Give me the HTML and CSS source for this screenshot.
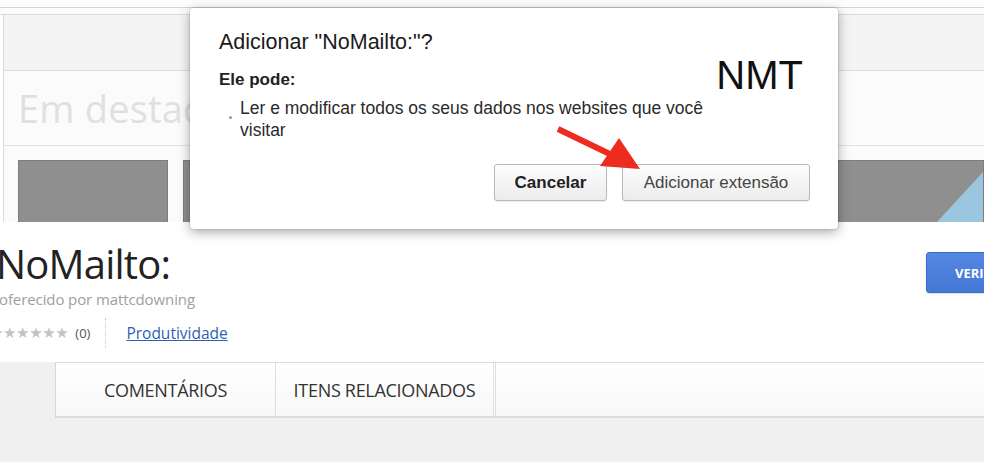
FILE: index.html
```html
<!DOCTYPE html>
<html lang="pt">
<head>
<meta charset="utf-8">
<title>NoMailto:</title>
<link rel="stylesheet" href="styles.css">
</head>
<body>
<div class="page">
  <div class="banner">
    <div class="banner-top"></div>
    <div class="banner-frame">
      <div class="band"></div>
      <div class="featured"><span class="featured-title">Em destaque</span></div>
      <div class="tiles">
        <div class="tile"></div>
        <div class="tile tile-wide"><div class="tile-accent"></div></div>
      </div>
    </div>
  </div>

  <div class="detail">
    <div class="detail-info">
      <h1 class="ext-title">NoMailto:</h1>
      <div class="ext-author">oferecido por mattcdowning</div>
      <div class="ext-meta">
        <span class="stars">★★★★★★</span>
        <span class="count">(0)</span>
        <span class="sep"></span>
        <a class="category" href="#">Produtividade</a>
      </div>
    </div>
    <div class="detail-action">
      <button class="btn-primary">VERIFICANDO...</button>
    </div>
  </div>

  <div class="tabs-area">
    <div class="tabs">
      <div class="tab">COMENTÁRIOS</div>
      <div class="tab">ITENS RELACIONADOS</div>
      <div class="tab-rest"></div>
    </div>
  </div>

  <div class="dialog">
    <div class="dialog-title">Adicionar "NoMailto:"?</div>
    <div class="dialog-body">
      <div class="dialog-sub">Ele pode:</div>
      <ul class="perms">
        <li>Ler e modificar todos os seus dados nos websites que você visitar</li>
      </ul>
      <div class="stamp">NMT</div>
    </div>
    <div class="dialog-actions">
      <button class="btn btn-bold">Cancelar</button>
      <button class="btn">Adicionar extensão</button>
    </div>
    <svg class="arrow" width="100" height="60" viewBox="0 0 100 60">
      <line x1="8" y1="8" x2="66" y2="36" stroke="#ee2b1f" stroke-width="6" stroke-linecap="butt"/>
      <polygon points="50,45 69,17 90,48" fill="#ee2b1f"/>
    </svg>
  </div>
</div>
</body>
</html>
```

FILE: styles.css
```css
* { box-sizing: border-box; }
html, body { margin: 0; padding: 0; }
body {
  width: 984px;
  height: 462px;
  overflow: hidden;
  background: #ffffff;
  font-family: "Open Sans", "Liberation Sans", sans-serif;
}
.page {
  position: relative;
  width: 984px;
  height: 462px;
  display: flex;
  flex-direction: column;
}

/* ---------- banner ---------- */
.banner { height: 222px; display: flex; flex-direction: column; }
.banner-top {
  height: 15px;
  background: #fbfbfb;
  border-top: 7px solid #fdfdfd;
  border-bottom: 1px solid #d9d9d9;
  box-shadow: inset 0 1px 0 #d4d4d4;
}
.banner-frame {
  flex: 1;
  margin-left: 3px;
  border-left: 1px solid #dcdcdc;
  display: flex;
  flex-direction: column;
}
.band {
  height: 56px;
  background: #f4f4f4;
  border-bottom: 1px solid #dedede;
}
.featured {
  height: 75px;
  background: #fbfbfb;
  border-bottom: 1px solid #e4e4e4;
  padding-left: 14px;
  display: flex;
  align-items: center;
}
.featured-title {
  font-size: 38px;
  color: #e0e0e0;
  font-weight: 400;
  letter-spacing: 0.2px;
}
.tiles {
  flex: 1;
  background: #fbfbfb;
  padding: 14px 0 0 14px;
  display: flex;
  gap: 15px;
}
.tile {
  width: 150px;
  background: #8f8f8f;
  border: 1px solid #7d7d7d;
  border-bottom: none;
}
.tile-wide { flex: 1; position: relative; overflow: hidden; }
.tile-accent {
  position: absolute;
  right: 0;
  bottom: 0;
  width: 46px;
  height: 50px;
  background: #9cc5df;
  clip-path: polygon(100% 0, 100% 100%, 0 100%);
}

/* ---------- detail ---------- */
.detail {
  height: 140px;
  display: flex;
  justify-content: space-between;
}
.detail-info { margin-left: -4px; padding-top: 17px; }
.ext-title {
  margin: 0;
  font-size: 40px;
  line-height: 50px;
  font-weight: 400;
  color: #222;
  letter-spacing: -0.8px;
}
.ext-author {
  font-size: 15px;
  color: #a0a0a0;
  line-height: 20px;
  padding-left: 3px;
  letter-spacing: -0.1px;
}
.ext-meta {
  display: flex;
  align-items: center;
  margin-top: 9px;
  height: 30px;
}
.stars {
  color: #c4c4c4;
  font-size: 15px;
  letter-spacing: -0.4px;
  font-family: "DejaVu Sans", sans-serif;
  margin-left: -6px;
}
.count { font-size: 13px; color: #555; margin-left: 7px; }
.sep {
  width: 0;
  height: 30px;
  border-left: 1px dotted #c8c8c8;
  margin: 0 20px 0 15px;
}
.category { font-size: 15.5px; color: #2f5fb3; text-decoration: underline; }

.detail-action { padding-top: 30px; }
.btn-primary {
  width: 110px;
  height: 41px;
  margin-right: -52px;
  background: linear-gradient(#5387e0, #4478d6);
  border: 1px solid #3c6bc6;
  border-radius: 3px;
  color: #fff;
  font-family: "Open Sans", "Liberation Sans", sans-serif;
  font-size: 13px;
  font-weight: 700;
  text-align: left;
  padding: 0 0 0 28px;
  white-space: nowrap;
  box-shadow: 0 1px 2px rgba(0,0,0,0.15);
}

/* ---------- tabs ---------- */
.tabs-area {
  flex: 1;
  background: #f0f0f0;
  padding-left: 55px;
}
.tabs {
  display: flex;
  height: 56px;
  border-top: 1px solid #dcdcdc;
  border-bottom: 2px solid #dcdcdc;
  border-left: 1px solid #d6d6d6;
  background: linear-gradient(#ffffff, #f8f8f8);
}
.tab {
  width: 220px;
  display: flex;
  align-items: center;
  justify-content: center;
  font-size: 18px;
  color: #333;
  letter-spacing: -0.3px;
  border-right: 1px solid #dedede;
}
.tab + .tab { border-right: 3px double #e0e0e0; }
.tab-rest { flex: 1; }

/* ---------- dialog ---------- */
.dialog {
  position: absolute;
  left: 190px;
  top: 8px;
  width: 648px;
  height: 221px;
  background: #ffffff;
  border-radius: 4px;
  box-shadow: 0 3px 12px rgba(0,0,0,0.35), 0 0 0 1px rgba(0,0,0,0.08);
  padding: 21px 28px 0 29px;
  font-family: "Liberation Sans", Arial, sans-serif;
  color: #222;
}
.dialog-title {
  font-size: 21.5px;
  line-height: 26px;
  color: #1a1a1a;
}
.dialog-body { position: relative; margin-top: 15px; height: 94px; }
.dialog-sub {
  font-size: 17px;
  font-weight: 700;
  line-height: 20px;
  color: #222;
}
.perms {
  margin: 7px 0 0 0;
  padding: 0 0 0 21px;
  list-style: none;
  width: 520px;
  font-size: 17.5px;
  line-height: 22px;
  color: #2a2a2a;
}
.perms li { position: relative; }
.perms li::before {
  content: "";
  position: absolute;
  left: -11px;
  top: 19px;
  width: 3px;
  height: 3px;
  border-radius: 50%;
  background: #999;
}
.stamp {
  position: absolute;
  right: 7px;
  top: -15px;
  font-size: 40px;
  line-height: 40px;
  color: #111;
}
.dialog-actions {
  display: flex;
  justify-content: flex-end;
  gap: 15px;
}
.btn {
  height: 37px;
  padding: 0 19px;
  border: 1px solid #b9b9b9;
  border-radius: 3px;
  background: linear-gradient(#fdfdfd, #ececec);
  font-family: "Liberation Sans", Arial, sans-serif;
  font-size: 17px;
  color: #444;
  box-shadow: 0 1px 1px rgba(0,0,0,0.08);
}
.btn-bold { font-weight: 700; color: #222; width: 113px; }
.btn:last-child { width: 188px; }
.arrow { position: absolute; left: 360px; top: 113px; }
```
